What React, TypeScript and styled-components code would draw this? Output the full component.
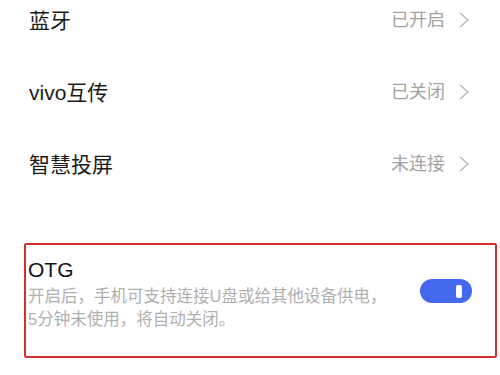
import React from "react";
import styled, { createGlobalStyle } from "styled-components";

const Global = createGlobalStyle`
  html, body { margin: 0; padding: 0; background: #fff; }
  body { font-family: "Liberation Sans", "Noto Sans CJK SC", sans-serif; overflow: hidden; }
`;

const Page = styled.div`
  width: 500px;
  height: 375px;
  overflow: hidden;
  background: #fff;
`;

const List = styled.div`
  margin-top: -16px;
  display: flex;
  flex-direction: column;
`;

const Row = styled.div`
  height: 72px;
  display: flex;
  align-items: center;
  justify-content: space-between;
  padding: 0 30px 0 29px;
`;

const Title = styled.span`
  font-size: 21px;
  color: #1a1a1a;
  line-height: 1;
`;

const Right = styled.span`
  display: flex;
  align-items: center;
  gap: 13px;
`;

const Value = styled.span`
  font-size: 18px;
  color: #a3a3a3;
  line-height: 1;
`;

const Box = styled.div`
  margin: 43px 3px 0 24px;
  height: 115px;
  box-sizing: border-box;
  border: 2px solid #d42f2f;
  border-radius: 2px;
  display: flex;
  align-items: flex-start;
  justify-content: space-between;
  padding: 13px 23px 0 2px;
`;

const Texts = styled.div`
  display: flex;
  flex-direction: column;
`;

const OtgTitle = styled.div`
  font-size: 21px;
  line-height: 24px;
  color: #111;
`;

const Desc = styled.div`
  margin-top: 3px;
  font-size: 16.5px;
  line-height: 23px;
  color: #b0b0b0;
  white-space: nowrap;
`;

const Toggle = styled.div`
  margin-top: 21px;
  width: 52px;
  height: 24px;
  border-radius: 12px;
  background: #4468ee;
  display: flex;
  align-items: center;
  justify-content: flex-end;
  padding-right: 10px;
  box-sizing: border-box;
`;

const Knob = styled.div`
  width: 6px;
  height: 13px;
  border-radius: 2px;
  background: #fff;
`;

const Chevron = () => (
  <svg width="12" height="16" viewBox="0 0 12 16">
    <polyline points="2,1 10,8 2,15" fill="none" stroke="#b8b8b8" strokeWidth="1.4" strokeLinejoin="miter" />
  </svg>
);

const rows = [
  { title: "蓝牙", value: "已开启" },
  { title: "vivo互传", value: "已关闭" },
  { title: "智慧投屏", value: "未连接" },
];

export default function App() {
  return (
    <Page>
      <Global />
      <List>
        {rows.map((r) => (
          <Row key={r.title}>
            <Title>{r.title}</Title>
            <Right>
              <Value>{r.value}</Value>
              <Chevron />
            </Right>
          </Row>
        ))}
      </List>
      <Box>
        <Texts>
          <OtgTitle>OTG</OtgTitle>
          <Desc>
            开启后，手机可支持连接U盘或给其他设备供电，
            <br />
            5分钟未使用，将自动关闭。
          </Desc>
        </Texts>
        <Toggle>
          <Knob />
        </Toggle>
      </Box>
    </Page>
  );
}
